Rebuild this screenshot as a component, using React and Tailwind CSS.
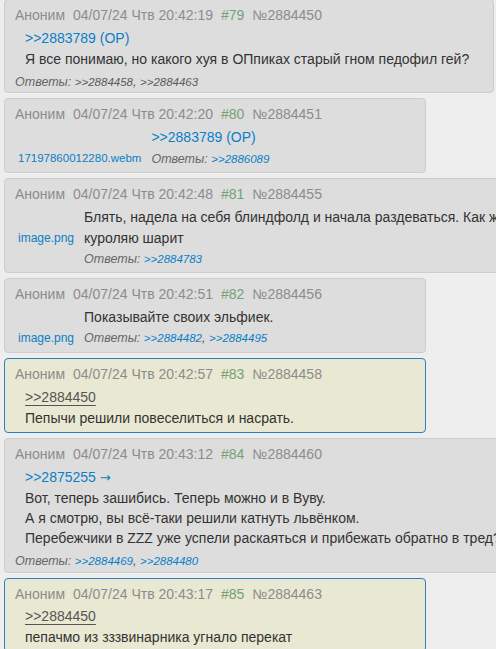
const font = { fontFamily: '"Liberation Sans", Arial, sans-serif' };

const PostHead = ({ time, n, num }) => (
  <div className="flex gap-2 text-[14px] leading-[20px] text-[#8c8c8c] whitespace-nowrap">
    <span>Аноним</span>
    <span>04/07/24 Чтв {time}</span>
    <span className="text-[#74a174]">#{n}</span>
    <span>№{num}</span>
  </div>
);

const Replies = ({ links, grey, className = '' }) => (
  <div className={`text-[12.5px] leading-[20px] italic text-[#666] whitespace-nowrap ${className}`}>
    Ответы:{' '}
    {links.map((l, i) => (
      <span key={l}>
        <span className={`text-[11.5px] ${grey ? 'text-[#5a5a5a]' : 'text-[#0a7fc6]'}`}>&gt;&gt;{l}</span>
        {i < links.length - 1 && <span className="text-[#555]">, </span>}
      </span>
    ))}
  </div>
);

const Post = ({ width, hl, className = '', children }) => (
  <div
    className={`shrink-0 rounded-[4px] border px-[10px] pt-[5px] ${
      hl ? 'bg-[#e9e8d2] border-[#2a80c2]' : 'bg-[#dddddd] border-[#cdcdcd]'
    } ${width} ${className}`}
  >
    {children}
  </div>
);

const FileBox = ({ name, size = 'text-[12px]' }) => (
  <div className="ml-[3px] mr-[10px] pt-[21px] shrink-0">
    <div className={`${size} leading-[20px] text-[#0a7fc6] whitespace-nowrap`}>{name}</div>
  </div>
);

export default function App() {
  return (
    <div style={font} className="w-[496px] h-[649px] overflow-hidden bg-[#eeeeee]">
      <div className="flex flex-col items-start gap-[5px] pl-[4px] -mt-[1px]">
        {/* #79 */}
        <Post width="w-[490px]" className="pb-0">
          <PostHead time="20:42:19" n="79" num="2884450" />
          <div className="mt-[3px] ml-[10px] text-[14px] text-[#333]">
            <div className="leading-[21px] text-[#0a7fc6]">&gt;&gt;2883789 (OP)</div>
            <div className="leading-[20px]">Я все понимаю, но какого хуя в ОПпиках старый гном педофил гей?</div>
          </div>
          <Replies links={['2884458', '2884463']} grey className="mt-[3px]" />
        </Post>

        {/* #80 */}
        <Post width="w-[422px]" className="pb-[3px]">
          <PostHead time="20:42:20" n="80" num="2884451" />
          <div className="flex mt-[3px]">
            <FileBox name="17197860012280.webm" size="text-[11.5px]" />
            <div className="text-[14px] text-[#333]">
              <div className="leading-[21px] text-[#0a7fc6]">&gt;&gt;2883789 (OP)</div>
              <Replies links={['2886089']} className="mt-[1px]" />
            </div>
          </div>
        </Post>

        {/* #81 */}
        <Post width="w-[560px]" className="pb-[3px]">
          <PostHead time="20:42:48" n="81" num="2884455" />
          <div className="flex mt-[3px]">
            <FileBox name="image.png" />
            <div className="text-[14px] text-[#333] whitespace-nowrap">
              <div className="leading-[21px]">Блять, надела на себя блиндфолд и начала раздеваться. Как же я</div>
              <div className="leading-[21px]">куроляю шарит</div>
              <Replies links={['2884783']} />
            </div>
          </div>
        </Post>

        {/* #82 */}
        <Post width="w-[422px]" className="pb-[4px]">
          <PostHead time="20:42:51" n="82" num="2884456" />
          <div className="flex mt-[3px]">
            <FileBox name="image.png" />
            <div className="text-[14px] text-[#333]">
              <div className="leading-[21px]">Показывайте своих эльфиек.</div>
              <Replies links={['2884482', '2884495']} />
            </div>
          </div>
        </Post>

        {/* #83 */}
        <Post width="w-[422px]" hl className="pb-[4px]">
          <PostHead time="20:42:57" n="83" num="2884458" />
          <div className="mt-[3px] ml-[10px] text-[14px] text-[#333]">
            <div className="leading-[21px]">
              <span className="text-[#555] underline underline-offset-[3px]">&gt;&gt;2884450</span>
            </div>
            <div className="leading-[20px]">Пепычи решили повеселиться и насрать.</div>
          </div>
        </Post>

        {/* #84 */}
        <Post width="w-[560px]" className="pb-[1px]">
          <PostHead time="20:43:12" n="84" num="2884460" />
          <div className="mt-[3px] ml-[10px] text-[14px] text-[#333] whitespace-nowrap">
            <div className="leading-[21px] text-[#0a7fc6]">
              &gt;&gt;2875255 <span style={{ fontFamily: '"DejaVu Sans", sans-serif' }} className="text-[13px]">→</span>
            </div>
            <div className="leading-[20px]">Вот, теперь зашибись. Теперь можно и в Вуву.</div>
            <div className="leading-[20px]">А я смотрю, вы всё-таки решили катнуть львёнком.</div>
            <div className="leading-[20px]">Перебежчики в ZZZ уже успели раскаяться и прибежать обратно в тред?</div>
          </div>
          <Replies links={['2884469', '2884480']} className="mt-[3px]" />
        </Post>

        {/* #85 */}
        <Post width="w-[422px]" hl className="pb-[4px]">
          <PostHead time="20:43:17" n="85" num="2884463" />
          <div className="mt-[2px] ml-[10px] text-[14px] text-[#333]">
            <div className="leading-[21px]">
              <span className="text-[#555] underline underline-offset-[3px]">&gt;&gt;2884450</span>
            </div>
            <div className="leading-[20px]">пепачмо из зззвинарника угнало перекат</div>
          </div>
        </Post>
      </div>
    </div>
  );
}
